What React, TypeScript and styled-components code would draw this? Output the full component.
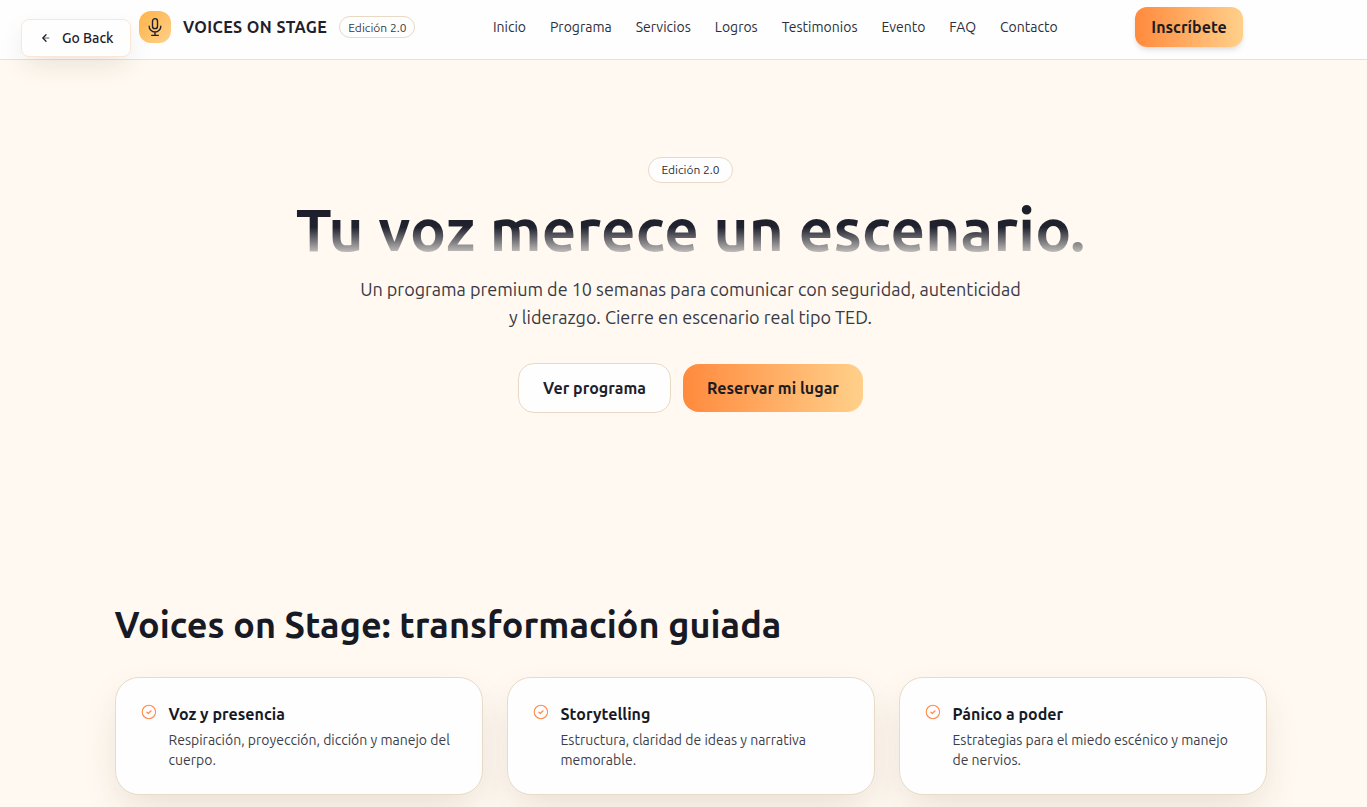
import React from 'react';
import styled, { createGlobalStyle } from 'styled-components';

const GlobalStyle = createGlobalStyle`
  *, *::before, *::after { box-sizing: border-box; }
  html, body { margin: 0; height: 100%; overflow: hidden; }
  body {
    background: #fff9f1;
    color: #1e202c;
    font-family: Ubuntu, "Noto Sans", sans-serif;
    font-size: 16px;
    line-height: 24px;
  }
  h1, h2, h3, p { margin: 0; }
`;

const Page = styled.div`
  height: 807px;
  overflow: hidden;
`;

const Header = styled.header`
  height: 60px;
  background: #fefefe;
  border-bottom: 1px solid #e8e1d9;
  padding: 0 124px 5px 139px;
  display: flex;
  align-items: center;
  justify-content: space-between;
`;

const Brand = styled.div`
  display: flex;
  align-items: center;
  gap: 12px;
`;

const LogoTile = styled.span`
  width: 32px;
  height: 32px;
  border-radius: 12px;
  display: grid;
  place-items: center;
  background: linear-gradient(135deg, #ffb347, #ffd08a);
  color: #1e202c;
`;

const BrandName = styled.span`
  font-weight: 600;
  letter-spacing: 0.42px;
  white-space: nowrap;
`;

const Badge = styled.span<{ $large?: boolean }>`
  display: inline-block;
  height: ${p => (p.$large ? '26px' : '22px')};
  padding: ${p => (p.$large ? '4px 12px' : '3px 8px')};
  border: 1px solid #e8d9c5;
  border-radius: 999px;
  background: #fefefe;
  font-size: 12px;
  line-height: 16px;
  color: ${p => (p.$large ? '#2b2c38' : '#393a45')};
  white-space: nowrap;
`;

const Nav = styled.nav`
  display: flex;
  gap: 24px;
  font-size: 14px;
  line-height: 20px;
  color: #2d2e3a;
`;

const Cta = styled.button<{ $kind: 'small' | 'plain' | 'large' }>`
  font: 600 16px/24px Ubuntu, "Noto Sans", sans-serif;
  letter-spacing: 0.02px;
  color: ${p => (p.$kind === 'plain' ? '#1e202c' : '#1c1c22')};
  border: ${p => (p.$kind === 'plain' ? '1px solid #e8d9c5' : '0')};
  border-radius: ${p => (p.$kind === 'small' ? '12px' : '16px')};
  padding: ${p => (p.$kind === 'small' ? '8px 16.2px' : '12px 24px')};
  background: ${p => (p.$kind === 'plain' ? '#fefefe' : 'linear-gradient(90deg, #ff8a3d, #ffd08a)')};
  box-shadow: ${p => (p.$kind === 'small' ? '0 4px 6px -1px rgba(0,0,0,.1), 0 2px 4px -2px rgba(0,0,0,.1)' : 'none')};
  white-space: nowrap;
`;

const GoBack = styled.button`
  position: absolute;
  left: 21px;
  top: 19px;
  width: 110px;
  height: 38px;
  padding: 0 0 0 16px;
  display: flex;
  align-items: center;
  gap: 8px;
  border: 1px solid #fbe6d4;
  border-radius: 8px;
  background: #fefefe;
  color: #1e202c;
  font: 500 14px/20px Ubuntu, "Noto Sans", sans-serif;
  box-shadow: 0 10px 28px -5px rgba(60, 35, 25, .13);
`;

const Hero = styled.section`
  padding: 97px 0 0 14px;
  display: flex;
  flex-direction: column;
  align-items: center;
  text-align: center;
`;

const Title = styled.h1`
  margin-top: 16px;
  font-size: 60px;
  line-height: 60px;
  font-weight: 700;
  letter-spacing: 0.23px;
  white-space: nowrap;
  color: transparent;
  background: linear-gradient(180deg, #1a1e29 0, #20222e 47%, #fff9f1 105%);
  background-clip: text;
  -webkit-background-clip: text;
`;

const Lead = styled.p`
  margin-top: 16px;
  width: 672px;
  font-size: 18px;
  line-height: 28px;
  color: #393a46;
`;

const Actions = styled.div`
  margin-top: 32px;
  display: flex;
  align-items: center;
  gap: 12px;
`;

const Features = styled.section`
  padding: 192px 100.5px 0 114.5px;
`;

const SectionTitle = styled.h2`
  font-size: 36px;
  line-height: 40px;
  font-weight: 600;
  letter-spacing: 0.05px;
  color: #171a24;
`;

const Cards = styled.div`
  margin-top: 32px;
  display: grid;
  grid-template-columns: repeat(3, 1fr);
  gap: 24px;
`;

const Card = styled.article`
  height: 118px;
  padding: 24px;
  border: 1px solid #e8dbc8;
  border-radius: 24px;
  background: #fefefe;
  box-shadow: 0 16px 40px -8px rgba(90, 50, 30, .15);
  display: flex;
  align-items: flex-start;
  gap: 12px;
  svg { flex: none; }
`;

const CardTitle = styled.h3`
  font-size: 16px;
  line-height: 24px;
  font-weight: 600;
  letter-spacing: 0.02px;
  color: #171a24;
`;

const CardText = styled.p`
  margin-top: 4px;
  font-size: 14px;
  line-height: 20px;
  color: #3d3e4a;
`;

const MicIcon = () => (
  <svg width="20" height="20" viewBox="0 0 24 24" fill="none" stroke="currentColor" strokeWidth="1.65" strokeLinecap="round" strokeLinejoin="round">
    <rect x="9" y="2" width="6" height="12" rx="3" />
    <path d="M5 11a7 7 0 0 0 14 0M12 18v4M8 22h8" />
  </svg>
);

const ArrowIcon = () => (
  <svg width="16" height="16" viewBox="0 0 16 16" fill="none" stroke="currentColor" strokeWidth="1.3" strokeLinecap="round" strokeLinejoin="round">
    <path d="M10.9 8H5" strokeWidth="1" strokeOpacity=".7" />
    <path d="M8 4.8L4.9 8L8 11.2" />
  </svg>
);

const CheckIcon = () => (
  <svg width="17" height="20" viewBox="0 0 17 20" fill="none" stroke="#ff8a4a" strokeLinecap="round" strokeLinejoin="round">
    <circle cx="8.9" cy="10" r="6.7" strokeWidth="1.1" />
    <path d="M6.9 10.2l1.4 1.3 2.8-2.7" strokeWidth="1.2" />
  </svg>
);

const links = ['Inicio', 'Programa', 'Servicios', 'Logros', 'Testimonios', 'Evento', 'FAQ', 'Contacto'];

const features = [
  { title: 'Voz y presencia', text: 'Respiración, proyección, dicción y manejo del cuerpo.' },
  { title: 'Storytelling', text: 'Estructura, claridad de ideas y narrativa memorable.' },
  { title: 'Pánico a poder', text: 'Estrategias para el miedo escénico y manejo de nervios.' },
];

export default function App() {
  return (
    <Page>
      <GlobalStyle />
      <Header>
        <Brand>
          <LogoTile><MicIcon /></LogoTile>
          <BrandName>VOICES ON STAGE</BrandName>
          <Badge>Edición 2.0</Badge>
        </Brand>
        <Nav>{links.map(link => <span key={link}>{link}</span>)}</Nav>
        <Cta $kind="small">Inscríbete</Cta>
      </Header>
      <GoBack><ArrowIcon />Go Back</GoBack>
      <Hero>
        <Badge $large>Edición 2.0</Badge>
        <Title>Tu voz merece un escenario.</Title>
        <Lead>Un programa premium de 10 semanas para comunicar con seguridad, autenticidad y liderazgo. Cierre en escenario real tipo TED.</Lead>
        <Actions>
          <Cta $kind="plain">Ver programa</Cta>
          <Cta $kind="large">Reservar mi lugar</Cta>
        </Actions>
      </Hero>
      <Features>
        <SectionTitle>Voices on Stage: transformación guiada</SectionTitle>
        <Cards>
          {features.map(({ title, text }) => (
            <Card key={title}>
              <CheckIcon />
              <div>
                <CardTitle>{title}</CardTitle>
                <CardText>{text}</CardText>
              </div>
            </Card>
          ))}
        </Cards>
      </Features>
    </Page>
  );
}
